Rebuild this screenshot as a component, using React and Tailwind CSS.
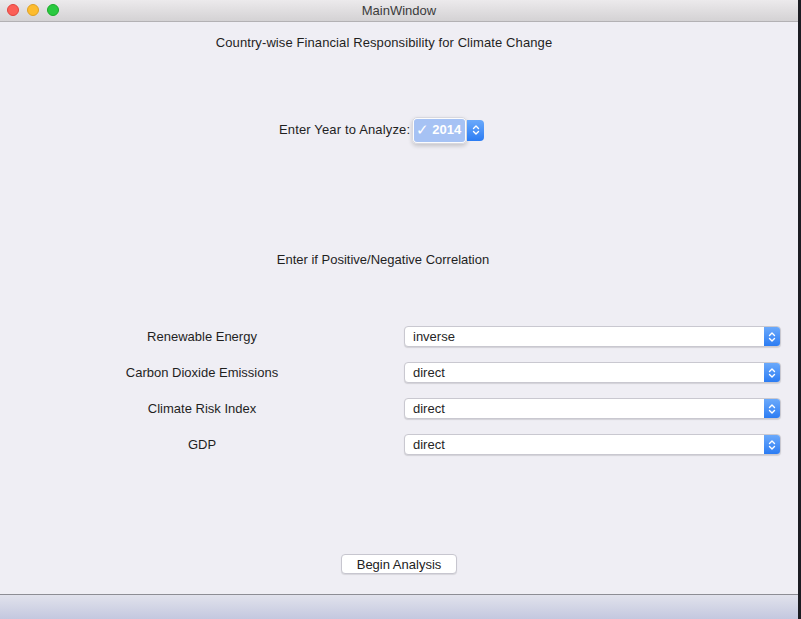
import React from 'react';

const font = { fontFamily: '"Liberation Sans", Arial, sans-serif' };

const Stepper = ({ className = '' }) => (
    <div className={`flex items-center justify-center bg-gradient-to-b from-[#6aa9fb] to-[#2b7cf3] ${className}`}>
        <svg width="8" height="12" viewBox="0 0 8 12" fill="none" stroke="white" strokeWidth="1.4" strokeLinecap="round" strokeLinejoin="round">
            <path d="M1.5 4.5 L4 2 L6.5 4.5" />
            <path d="M1.5 7.5 L4 10 L6.5 7.5" />
        </svg>
    </div>
);

const Combo = ({ value }) => (
    <div className="flex h-[21px] w-[377px] rounded-[4px] bg-white border border-[#c9c8d0] shadow-[0_1px_1px_rgba(0,0,0,0.12)] overflow-hidden">
        <div className="flex-1 flex items-center pl-[8px] text-[13px] text-[#262626]">{value}</div>
        <Stepper className="w-[16px] h-full" />
    </div>
);

const rows = [
    ['Renewable Energy', 'inverse'],
    ['Carbon Dioxide Emissions', 'direct'],
    ['Climate Risk Index', 'direct'],
    ['GDP', 'direct'],
];

const App = () => {
    return (
        <div className="w-[801px] h-[619px] flex bg-[#1b1c22] overflow-hidden" style={font}>
            <div className="w-[798px] h-full flex flex-col bg-[#efeef4]">
                {/* Title bar */}
                <div className="h-[22px] shrink-0 relative flex items-center justify-center bg-gradient-to-b from-[#eceaec] to-[#d4d2d4] border-b border-[#b3b1b4]">
                    <div className="absolute left-[7px] top-[4px] flex gap-[8px]">
                        <span className="w-[12px] h-[12px] rounded-full bg-[#fc5f57] border border-[#e0443e]" />
                        <span className="w-[12px] h-[12px] rounded-full bg-[#fdbc2e] border border-[#dea123]" />
                        <span className="w-[12px] h-[12px] rounded-full bg-[#2ac940] border border-[#1aab29]" />
                    </div>
                    <span className="text-[13px] text-[#3b3b3b]">MainWindow</span>
                </div>

                {/* Body */}
                <div className="flex-1 flex flex-col text-[13px] text-[#1f1f1f]">
                    <div className="w-[768px] text-center mt-[13px] leading-[16px] tracking-[0.1px]">
                        Country-wise Financial Responsibility for Climate Change
                    </div>

                    <div className="mt-[65px] flex items-center h-[28px] pl-[279px]">
                        <span className="tracking-[0.15px]">Enter Year to Analyze:</span>
                        <div className="ml-[2px] flex items-center">
                            <div className="h-[27px] w-[55px] rounded-[5px] bg-white/80 border border-[#d8d8de] shadow-[0_2px_4px_rgba(0,0,0,0.18)] p-[1px] flex">
                                <div className="flex-1 rounded-[3px] bg-[#a6c2f4] flex items-center pl-[2px] text-white font-bold text-[13px]">
                                    <span className="font-normal text-[15px] mr-[3px]">✓</span>2014
                                </div>
                            </div>
                            <Stepper className="w-[17px] h-[21px] rounded-r-[4px]" />
                        </div>
                    </div>

                    <div className="mt-[108px] w-[766px] text-center leading-[16px]">
                        Enter if Positive/Negative Correlation
                    </div>

                    <div className="mt-[58px] flex flex-col gap-[15px]">
                        {rows.map(([label, value]) => (
                            <div key={label} className="flex items-center">
                                <div className="w-[404px] text-center">{label}</div>
                                <Combo value={value} />
                            </div>
                        ))}
                    </div>

                    <div className="mt-[99px] flex justify-center">
                        <button className="w-[116px] h-[20px] rounded-[4px] bg-white border border-[#c7c6cf] shadow-[0_1px_1px_rgba(0,0,0,0.1)] text-[13px] text-[#222]">
                            Begin Analysis
                        </button>
                    </div>
                </div>

                {/* Bottom bar */}
                <div className="h-[25px] shrink-0 bg-gradient-to-b from-[#e1e2ec] to-[#c4c8df] border-t border-[#8d8d94]" />
            </div>
        </div>
    );
};

export default App;
